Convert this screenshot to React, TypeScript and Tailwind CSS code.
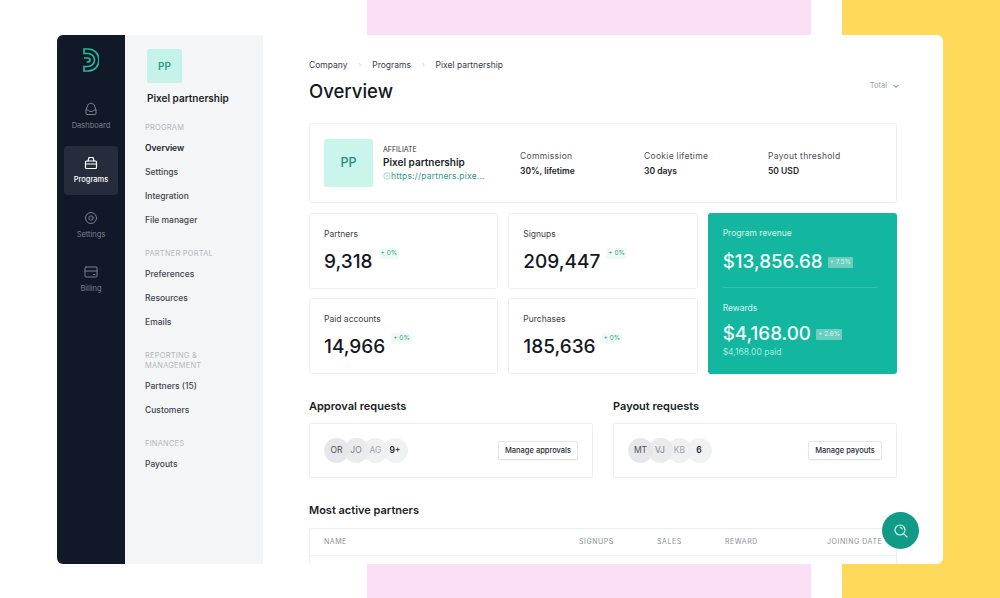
import React from "react";

const Rail = ({ icon, label, active, className = "" }: { icon: React.ReactNode; label: string; active?: boolean; className?: string }) => (
  <div className={`w-[54px] h-[49px] rounded-[4px] flex flex-col items-center justify-center gap-[4px] ${active ? "bg-[#252c3b] text-white font-medium" : "text-[#7a818e]"} ${className}`}>
    {icon}
    <span className="text-[7.5px] leading-[12px]">{label}</span>
  </div>
);

const sv = { width: 14, height: 14, viewBox: "0 0 14 14", fill: "none", stroke: "currentColor", strokeWidth: 1, strokeLinejoin: "round" as const, strokeLinecap: "round" as const };

const Section = ({ title, items, className = "" }: { title: React.ReactNode; items: string[]; className?: string }) => (
  <div className={className}>
    <div className="text-[7.5px] leading-[10px] tracking-[0.2px] text-[#b4b7bd] uppercase mb-[8px] whitespace-nowrap">{title}</div>
    <div className="flex flex-col gap-[10px]">
      {items.map((t) => (
        <div key={t} className={`text-[8.5px] leading-[14px] ${t === "Overview" ? "font-semibold text-[#1b2230]" : "font-medium text-[#3e4450]"}`}>{t}</div>
      ))}
    </div>
  </div>
);

const Info = ({ a, b }: { a: string; b: string }) => (
  <div className="w-[124px] shrink-0">
    <div className="text-[8.5px] leading-[14px] text-[#4a4f5a] tracking-[0.3px]">{a}</div>
    <div className="text-[8.5px] leading-[14px] mt-[1px] font-semibold text-[#20242c]">{b}</div>
  </div>
);

const Stat = ({ label, value, badge }: { label: string; value: string; badge: string }) => (
  <div className="border border-[#eeeff1] rounded-[3px] h-[76px] pl-[14px] pt-[13px]">
    <div className="text-[8.5px] leading-[14px] text-[#3e424c]">{label}</div>
    <div className="flex items-start mt-[7px]">
      <span className="text-[19px] leading-[28px] font-medium text-[#14181f]">{value}</span>
      <span className="ml-[6px] mt-[0px] h-[11px] px-[2px] bg-[#eefbf8] text-[#2f9d8c] text-[6.5px] leading-[11px] rounded-[1px]">{badge}</span>
    </div>
  </div>
);

const Avatars = ({ items }: { items: [string, string, string][] }) => (
  <div className="flex">
    {items.map(([t, bg, c], i) => (
      <div key={t} className={`w-[25px] h-[25px] rounded-full flex items-center justify-center text-[8.5px] ${bg} ${c} ${i ? "-ml-[5.5px]" : ""}`} style={{ zIndex: 4 - i }}>{t}</div>
    ))}
  </div>
);

const Requests = ({ title, avatars, btn, btnW }: { title: string; avatars: [string, string, string][]; btn: string; btnW: string }) => (
  <div className="w-[284px]">
    <div className="text-[11px] leading-[16px] font-semibold text-[#191d25]">{title}</div>
    <div className="mt-[9px] h-[55px] border border-[#eeeff1] rounded-[2px] pl-[14px] pr-[14px] flex items-center justify-between">
      <Avatars items={avatars} />
      <div className={`${btnW} h-[19px] border border-[#e3e5e8] rounded-[2px] text-[7.5px] leading-[17px] font-medium text-[#262a33] text-center shadow-[0_1px_1px_rgba(0,0,0,0.04)]`}>{btn}</div>
    </div>
  </div>
);

export default function App() {
  return (
    <div className="relative w-[1000px] h-[598px] overflow-hidden bg-white" style={{ fontFamily: "Inter, 'Liberation Sans', sans-serif" }}>
      <div className="absolute left-[367px] top-0 w-[444px] h-full bg-[#fbdff7]" />
      <div className="absolute left-[842px] top-0 w-[158px] h-full bg-[#ffd95a]" />
      <div className="relative pt-[35px] pl-[57px]">
        <div className="w-[886px] h-[529px] bg-white rounded-[6px] overflow-hidden flex">
          <aside className="w-[68px] shrink-0 bg-[#111827] flex flex-col items-center pt-[13px]">
            <svg width="16" height="24" viewBox="0 0 16 24" fill="none" stroke="#22b8a0" strokeWidth="1.7">
              <path d="M1 1h4a11 11 0 0 1 0 22H1v-4.5h4a6.5 6.5 0 0 0 0-13H1z" />
              <path d="M1 10h4a2 2 0 0 1 0 4H3.5" />
            </svg>
            <div className="mt-[20px] flex flex-col items-center gap-[5px]">
              <Rail label="Dashboard" icon={<svg {...sv}><path d="M2 8l2-5.5L7 1l3 1.5L12 8v3.5a1 1 0 0 1-1 1H3a1 1 0 0 1-1-1z" /><path d="M2 8h2.5l1 1.5h3L9.5 8H12" /></svg>} />
              <Rail active label="Programs" icon={<svg {...sv} strokeWidth={1.2}><path d="M4 5l1-3.5h4L10 5" /><rect x="1.5" y="5" width="11" height="7.5" rx="1" /><path d="M1.5 8h11" /></svg>} />
              <Rail className="mt-[1px]" label="Settings" icon={<svg {...sv}><circle cx="7" cy="7" r="5.5" /><circle cx="7" cy="7" r="2.2" /></svg>} />
              <Rail label="Billing" icon={<svg {...sv}><rect x="1" y="2" width="12" height="10" rx="1" /><path d="M1 6h12M9.5 9.5h1.5" /></svg>} />
            </div>
          </aside>
          <nav className="w-[138px] shrink-0 bg-[#f4f5f7] pl-[20px] pt-[14px]">
            <div className="ml-[2px] w-[35px] h-[34px] bg-[#c5f3e9] rounded-[2px] flex items-center justify-center text-[10px] font-semibold text-[#2c9b88]">PP</div>
            <div className="ml-[2px] mt-[8px] text-[10px] leading-[14px] font-semibold text-[#1b1f27] whitespace-nowrap">Pixel partnership</div>
            <Section className="mt-[18px]" title="Program" items={["Overview", "Settings", "Integration", "File manager"]} />
            <Section className="mt-[22px]" title="Partner portal" items={["Preferences", "Resources", "Emails"]} />
            <Section className="mt-[22px]" title={<>Reporting &amp;<br />Management</>} items={["Partners (15)", "Customers"]} />
            <Section className="mt-[22px]" title="Finances" items={["Payouts"]} />
          </nav>
          <main className="relative flex-1 min-w-0 pl-[46px] pr-[46px] pt-[23px] overflow-hidden">
            <div className="flex items-center text-[8.5px] leading-[14px] text-[#383c46]">
              <span>Company</span>
              <span className="mx-[11px] text-[#c9ccd2] text-[7px]">›</span>
              <span>Programs</span>
              <span className="mx-[11px] text-[#c9ccd2] text-[7px]">›</span>
              <span>Pixel partnership</span>
            </div>
            <div className="flex items-center justify-between mt-[4px]">
              <h1 className="text-[18.5px] leading-[30px] font-medium text-[#14181f]">Overview</h1>
              <div className="flex items-center gap-[5px] text-[7.5px] text-[#a0a3aa] mr-[-3px] mb-[10px]">
                Total
                <svg width="8" height="8" viewBox="0 0 8 8" fill="none" stroke="#6f7480" strokeWidth="1"><path d="M1.5 3l2.5 2.5L6.5 3" /></svg>
              </div>
            </div>
            <div className="mt-[17px] h-[80px] border border-[#eeeff1] rounded-[3px] pl-[14px] flex items-center">
              <div className="w-[49px] h-[48px] bg-[#c9f5ec] rounded-[2px] flex items-center justify-center text-[12.5px] font-medium text-[#1f8f7e] shrink-0">PP</div>
              <div className="ml-[10px] w-[137px] shrink-0 pt-[1px]">
                <div className="text-[7px] leading-[10px] text-[#2b2f38]">AFFILIATE</div>
                <div className="text-[10px] leading-[15px] font-semibold text-[#1b1f27]">Pixel partnership</div>
                <div className="flex items-center text-[8.5px] leading-[13px] text-[#2c9b88] tracking-[0.2px]">
                  <svg width="8" height="8" viewBox="0 0 8 8" fill="none" stroke="#8fcfc3" strokeWidth="0.8" className="shrink-0"><circle cx="4" cy="4" r="3.2" /><path d="M2.5 4h3" /></svg>
                  https://partners.pixe...
                </div>
              </div>
              <Info a="Commission" b="30%, lifetime" />
              <Info a="Cookie lifetime" b="30 days" />
              <Info a="Payout threshold" b="50 USD" />
            </div>
            <div className="mt-[10px] grid grid-cols-3 gap-x-[10px] gap-y-[9px]">
              <Stat label="Partners" value="9,318" badge="+ 0%" />
              <Stat label="Signups" value="209,447" badge="+ 0%" />
              <div className="row-span-2 bg-[#13b69f] rounded-[3px] pl-[15px] pr-[20px] pt-[13px] text-white">
                <div className="text-[8.5px] leading-[14px] text-[#d9f7f1]">Program revenue</div>
                <div className="flex items-center mt-[8px]">
                  <span className="text-[18.8px] leading-[28px] font-medium text-[#f2fffc]">$13,856.68</span>
                  <span className="ml-[5px] h-[11px] px-[2px] bg-[#6ccfbd] text-[#d5f5ee] text-[6.5px] leading-[11px] rounded-[1px]">+ 7.5%</span>
                </div>
                <div className="h-px bg-[#2fc3ad] mt-[11px]" />
                <div className="text-[8.5px] leading-[14px] text-[#d9f7f1] mt-[13px]">Rewards</div>
                <div className="flex items-center mt-[5px]">
                  <span className="text-[18.8px] leading-[28px] font-medium text-[#f2fffc]">$4,168.00</span>
                  <span className="ml-[5px] h-[11px] px-[2px] bg-[#6ccfbd] text-[#d5f5ee] text-[6.5px] leading-[11px] rounded-[1px]">+ 2.6%</span>
                </div>
                <div className="text-[8.5px] leading-[12px] -mt-[2px] text-[#a5ebdd]">$4,168.00 paid</div>
              </div>
              <Stat label="Paid accounts" value="14,966" badge="+ 0%" />
              <Stat label="Purchases" value="185,636" badge="+ 0%" />
            </div>
            <div className="mt-[24px] flex justify-between">
              <Requests
                btnW="w-[80px]"
                title="Approval requests"
                btn="Manage approvals"
                avatars={[["OR", "bg-[#e6e7ea]", "text-[#4d515b]"], ["JO", "bg-[#eaebed]", "text-[#7d818a]"], ["AG", "bg-[#eff0f2]", "text-[#a3a6ad]"], ["9+", "bg-[#f1f2f4]", "text-[#2a2e37] font-semibold"]]}
              />
              <Requests
                btnW="w-[74px]"
                title="Payout requests"
                btn="Manage payouts"
                avatars={[["MT", "bg-[#e6e7ea]", "text-[#4d515b]"], ["VJ", "bg-[#eaebed]", "text-[#7d818a]"], ["KB", "bg-[#eff0f2]", "text-[#a3a6ad]"], ["6", "bg-[#f1f2f4]", "text-[#2a2e37] font-semibold"]]}
              />
            </div>
            <div className="mt-[24px] text-[11px] leading-[16px] font-semibold text-[#191d25]">Most active partners</div>
            <div className="mt-[10px] h-[80px] border border-[#eeeff1] rounded-[2px]">
              <div className="h-[27px] border-b border-[#eeeff1] pl-[14px] flex items-center text-[7px] tracking-[0.55px] text-[#8b8f98] whitespace-nowrap">
                <span className="w-[255px]">NAME</span>
                <span className="w-[78px]">SIGNUPS</span>
                <span className="w-[68px]">SALES</span>
                <span className="w-[102px]">REWARD</span>
                <span>JOINING DATE</span>
              </div>
            </div>
            <div className="absolute left-[619px] top-[477px] w-[37px] h-[37px] rounded-full bg-[#119a86] flex items-center justify-center">
              <svg width="16" height="16" viewBox="0 0 16 16" fill="none" stroke="#d8f5ef" strokeWidth="1.2" strokeLinecap="round"><circle cx="7" cy="7" r="5" /><path d="M10.8 10.8L14 14" /><path d="M7 4.5a2.5 2.5 0 0 1 2.2 1.4" /></svg>
            </div>
          </main>
        </div>
      </div>
    </div>
  );
}
